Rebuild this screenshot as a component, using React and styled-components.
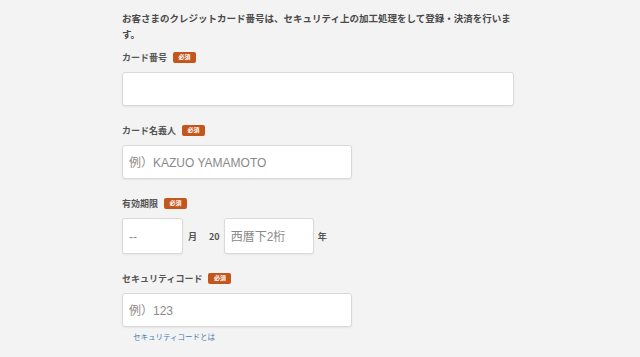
import React from 'react'
import styled, { createGlobalStyle } from 'styled-components'

const GlobalStyle = createGlobalStyle`
  html, body {
    margin: 0;
    padding: 0;
    background: #f3f3f3;
  }
  body {
    font-family: "Noto Sans CJK JP", "Noto Sans", sans-serif;
    color: #444;
  }
`

const Page = styled.div`
  width: 640px;
  height: 357px;
  box-sizing: border-box;
  padding: 10px 0 0 122px;
  overflow: hidden;
`

const Form = styled.div`
  width: 392px;
  display: flex;
  flex-direction: column;
`

const Intro = styled.p`
  margin: 0 0 8px;
  font-size: 9.5px;
  line-height: 16px;
  font-weight: 700;
  color: #4a4a4a;
`

const Field = styled.div`
  display: flex;
  flex-direction: column;
  margin-bottom: 17px;
`

const Label = styled.div`
  display: flex;
  align-items: center;
  gap: 6px;
  height: 14px;
  margin-bottom: 8px;
  font-size: 9px;
  font-weight: 700;
  color: #555;
`

const Badge = styled.span`
  display: inline-flex;
  align-items: center;
  justify-content: center;
  width: 23px;
  height: 11px;
  border-radius: 2px;
  background: #c2561d;
  color: #fff;
  font-size: 6px;
  font-weight: 700;
  line-height: 1;
`

const Input = styled.input`
  box-sizing: border-box;
  width: ${(p) => p.$w}px;
  height: ${(p) => p.$h || 34}px;
  padding: 1px 6px 0;
  border: 1px solid #d9d9d9;
  border-radius: 3px;
  background: #fff;
  box-shadow: 0 1px 2px rgba(0, 0, 0, 0.06);
  font-family: "Liberation Sans", "Noto Sans CJK JP", sans-serif;
  font-size: 12px;
  color: #444;
  outline: none;
  &::placeholder {
    color: #8a8a8a;
  }
`

const Row = styled.div`
  display: flex;
  align-items: center;
`

const Unit = styled.span`
  font-size: 9px;
  font-weight: 700;
  color: #555;
  margin: ${(p) => p.$m};
`

const HelpLink = styled.a`
  margin: 4px 0 0 11px;
  font-size: 7.5px;
  color: #4a7bb4;
  text-decoration: none;
`

const Required = () => <Badge>必須</Badge>

export default function App() {
  return (
    <Page>
      <GlobalStyle />
      <Form>
        <Intro>
          お客さまのクレジットカード番号は、セキュリティ上の加工処理をして登録・決済を行います。
        </Intro>

        <Field>
          <Label>カード番号 <Required /></Label>
          <Input $w={392} />
        </Field>

        <Field>
          <Label>カード名義人 <Required /></Label>
          <Input $w={230} placeholder="例）KAZUO YAMAMOTO" />
        </Field>

        <Field>
          <Label>有効期限 <Required /></Label>
          <Row>
            <Input $w={61} $h={36} placeholder="--" />
            <Unit $m="0 0 0 5px">月</Unit>
            <Unit $m="0 4px 0 12px">20</Unit>
            <Input $w={90} $h={36} placeholder="西暦下2桁" />
            <Unit $m="0 0 0 4px">年</Unit>
          </Row>
        </Field>

        <Field>
          <Label>セキュリティコード <Required /></Label>
          <Input $w={230} placeholder="例）123" />
          <HelpLink href="#">セキュリティコードとは</HelpLink>
        </Field>
      </Form>
    </Page>
  )
}
